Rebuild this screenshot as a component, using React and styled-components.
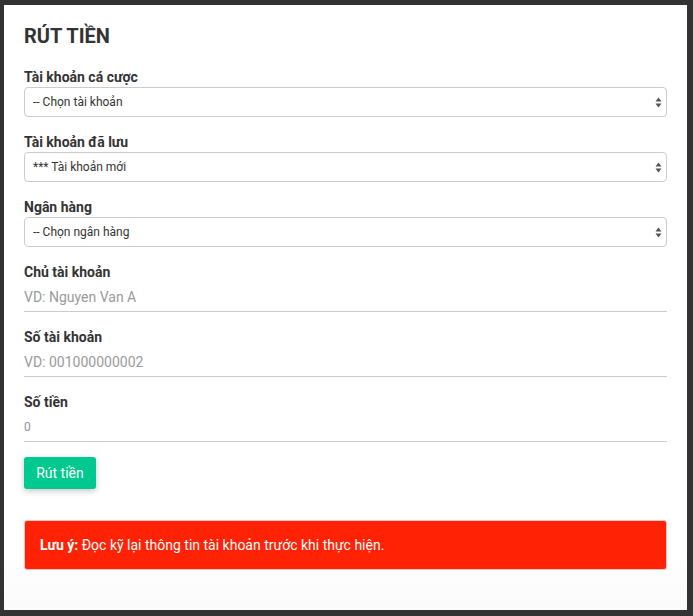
import React from "react";
import styled, { createGlobalStyle } from "styled-components";

const Global = createGlobalStyle`
  html, body { margin: 0; padding: 0; background: #333333; }
  body { font-family: Roboto, "Liberation Sans", Arial, sans-serif; overflow: hidden; }
  * { box-sizing: border-box; }
`;

const Frame = styled.div`
  padding: 5px 6px 6px 4px;
  height: 616px;
`;

const Panel = styled.div`
  background: linear-gradient(to bottom, #ffffff 0%, #ffffff 90%, #fbfbfb 100%);
  height: 605px;
  padding: 20px 20px 40px 20px;
  display: flex;
  flex-direction: column;
`;

const Title = styled.h2`
  margin: 0 0 20px 0;
  font-size: 20px;
  line-height: 22px;
  font-weight: 700;
  color: #333333;
`;

const Field = styled.div`
  display: flex;
  flex-direction: column;
  margin-bottom: 15px;
`;

const Label = styled.label`
  font-size: 14px;
  line-height: 20px;
  font-weight: 700;
  color: #333333;
`;

const SelectWrap = styled.div`
  position: relative;
  height: 30px;
`;

const Select = styled.select`
  appearance: none;
  -webkit-appearance: none;
  width: 100%;
  height: 30px;
  border: 1px solid #cccccc;
  border-radius: 4px;
  background: #ffffff;
  padding: 0 24px 0 8px;
  font-family: Roboto, "Liberation Sans", Arial, sans-serif;
  font-size: 12px;
  color: #333333;
  outline: none;
`;

const Arrows = styled.svg`
  position: absolute;
  right: 5px;
  top: 10px;
  pointer-events: none;
`;

const TextInput = styled.input`
  width: 100%;
  height: 30px;
  border: none;
  border-bottom: 1px solid #cccccc;
  padding: 0;
  font-family: Roboto, "Liberation Sans", Arial, sans-serif;
  font-size: ${(p) => (p.$small ? "12px" : "14px")};
  color: ${(p) => (p.$small ? "#8c9099" : "#333333")};
  outline: none;
  background: transparent;
  &::placeholder { color: #9a9a9a; }
`;

const Button = styled.button`
  align-self: flex-start;
  width: 72px;
  height: 32px;
  border: none;
  border-radius: 3px;
  background: #00c98f;
  color: #ffffff;
  font-family: Roboto, "Liberation Sans", Arial, sans-serif;
  font-size: 14px;
  box-shadow: 0 2px 6px rgba(0, 0, 0, 0.22);
  padding: 0;
  cursor: pointer;
`;

const Alert = styled.div`
  margin-top: 31px;
  height: 50px;
  background: #ff2204;
  border: 1px solid #f2c4cc;
  border-radius: 3px;
  padding: 14px 15px;
  color: #ffffff;
  font-size: 14px;
  line-height: 20px;
  b { font-weight: 700; }
`;

const ArrowIcon = () => (
  <Arrows width="7" height="11" viewBox="0 0 7 11">
    <path d="M3.5 0.5 L6.5 4.5 L0.5 4.5 Z" fill="#555" />
    <path d="M3.5 10.5 L6.5 6.5 L0.5 6.5 Z" fill="#555" />
  </Arrows>
);

const SelectField = ({ label, option }) => (
  <Field>
    <Label>{label}</Label>
    <SelectWrap>
      <Select defaultValue="a">
        <option value="a">{option}</option>
      </Select>
      <ArrowIcon />
    </SelectWrap>
  </Field>
);

const InputField = ({ label, placeholder, value, small }) => (
  <Field>
    <Label>{label}</Label>
    <TextInput placeholder={placeholder} defaultValue={value} $small={small} />
  </Field>
);

export default function App() {
  return (
    <>
      <Global />
      <Frame>
        <Panel>
          <Title>RÚT TIỀN</Title>
          <SelectField label="Tài khoản cá cược" option="-- Chọn tài khoản" />
          <SelectField label="Tài khoản đã lưu" option="*** Tài khoản mới" />
          <SelectField label="Ngân hàng" option="-- Chọn ngân hàng" />
          <InputField label="Chủ tài khoản" placeholder="VD: Nguyen Van A" />
          <InputField label="Số tài khoản" placeholder="VD: 001000000002" />
          <InputField label="Số tiền" value="0" small />
          <Button>Rút tiền</Button>
          <Alert>
            <b>Lưu ý:</b> Đọc kỹ lại thông tin tài khoản trước khi thực hiện.
          </Alert>
        </Panel>
      </Frame>
    </>
  );
}
